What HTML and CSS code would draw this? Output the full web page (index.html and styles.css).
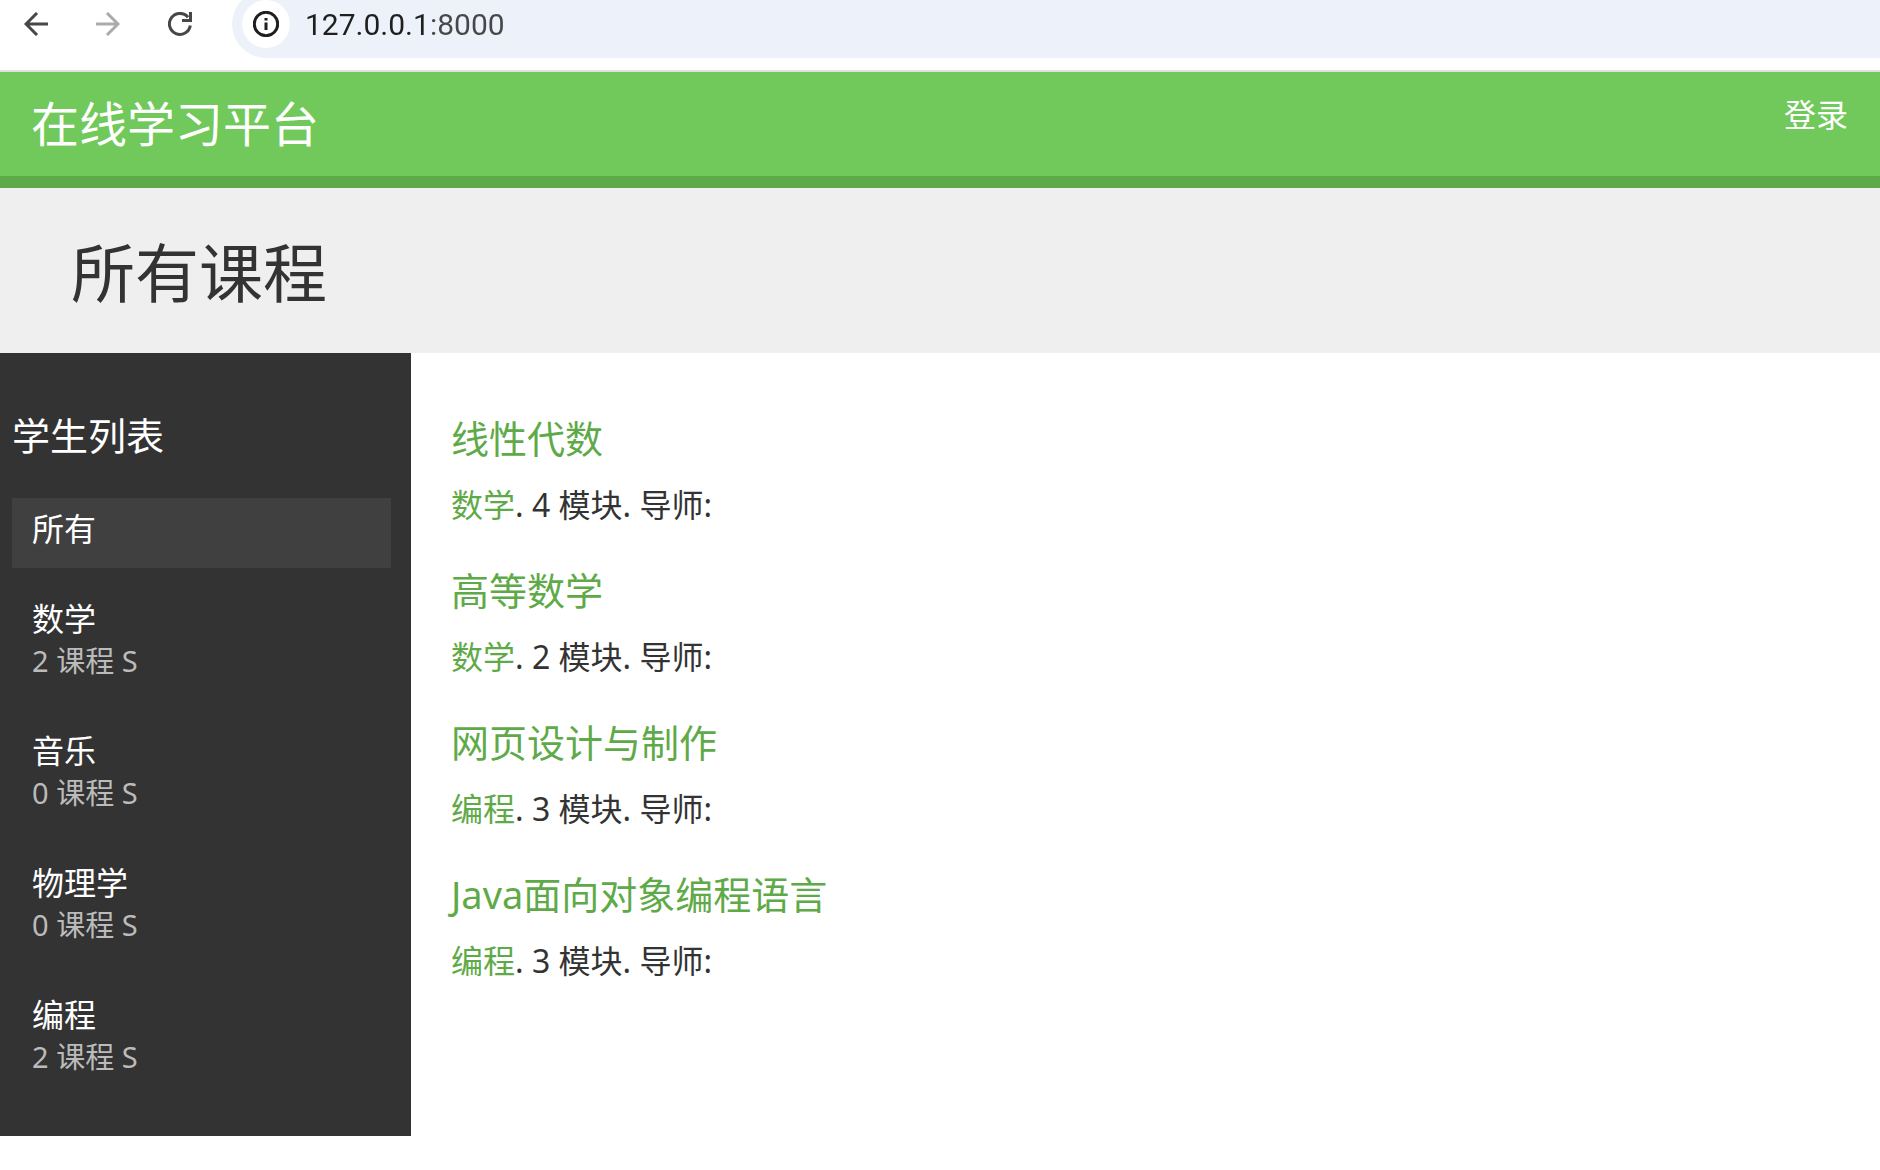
FILE: index.html
```html
<!DOCTYPE html>
<html lang="zh-CN">

<head>
    <meta charset="UTF-8">
    <meta name="viewport" content="width=device-width, initial-scale=1.0">
    <title>所有课程</title>
    <link rel="stylesheet" href="styles.css">
</head>

<body>
    <div class="browser-bar">
        <button class="nav-button" type="button" aria-label="后退">
            <svg viewBox="0 0 24 24"><path d="M24 12H2M13 1L2 12l11 11"/></svg>
        </button>
        <button class="nav-button" type="button" aria-label="前进" disabled>
            <svg viewBox="0 0 24 24"><path d="M0 12h22M11 1l11 11-11 11"/></svg>
        </button>
        <button class="nav-button" type="button" aria-label="刷新">
            <svg viewBox="0 0 24 24"><path d="M22.300 13.500A10.500 10.500 0 1 1 20 5.200M22.500 0v8.500H14"/></svg>
        </button>
        <div class="address">
            <button class="site-info" type="button" aria-label="网站信息">
                <svg viewBox="0 0 26 26"><circle cx="13" cy="13" r="11.700"/><path d="M13 11.500v7.500M13 7v2.600"/></svg>
            </button>
            <input class="url" type="text" value="127.0.0.1:8000" aria-label="地址">
        </div>
    </div>

    <header class="header">
        <a href="#" class="logo">在线学习平台</a>
        <a href="#" class="login">登录</a>
    </header>

    <h1 class="page-title">所有课程</h1>

    <div class="content">
        <nav class="sidebar">
            <h3>学生列表</h3>
            <ul>
                <li class="selected"><a href="#">所有</a></li>
                <li><a href="#">数学<small>2 课程 S</small></a></li>
                <li><a href="#">音乐<small>0 课程 S</small></a></li>
                <li><a href="#">物理学<small>0 课程 S</small></a></li>
                <li><a href="#">编程<small>2 课程 S</small></a></li>
            </ul>
        </nav>
        <main class="module">
            <section class="course">
                <h3><a href="#">线性代数</a></h3>
                <p><a href="#">数学</a>. 4 模块. 导师:</p>
            </section>
            <section class="course">
                <h3><a href="#">高等数学</a></h3>
                <p><a href="#">数学</a>. 2 模块. 导师:</p>
            </section>
            <section class="course">
                <h3><a href="#">网页设计与制作</a></h3>
                <p><a href="#">编程</a>. 3 模块. 导师:</p>
            </section>
            <section class="course">
                <h3><a href="#">Java面向对象编程语言</a></h3>
                <p><a href="#">编程</a>. 3 模块. 导师:</p>
            </section>
        </main>
    </div>
</body>

</html>
```

FILE: styles.css
```css
body {
    margin: 0;
    background-color: #fff;
    color: #333;
    font-family: "Noto Sans", "Noto Sans CJK SC", sans-serif;
    font-size: 32px;
    line-height: 42px;
}

a {
    color: #5faa48;
    text-decoration: none;
}

h1,
h3,
p,
ul {
    margin: 0;
    padding: 0;
    font-weight: normal;
}

/* browser toolbar */
.browser-bar {
    display: flex;
    align-items: flex-start;
    gap: 24px;
    height: 70px;
    padding-left: 12px;
    border-bottom: 2px solid #e0e0e0;
    overflow: hidden;
}

.browser-bar button {
    display: flex;
    flex: none;
    align-items: center;
    justify-content: center;
    padding: 0;
    border: none;
    background: none;
    color: #474747;
}

.nav-button {
    width: 48px;
    height: 48px;
}

.browser-bar .nav-button:disabled {
    color: #ababab;
}

.browser-bar svg {
    width: 24px;
    height: 24px;
    fill: none;
    stroke: currentColor;
    stroke-width: 3;
}

.address {
    display: flex;
    flex: 1;
    align-items: center;
    height: 68px;
    margin: -10px 0 0 4px;
    padding-left: 10px;
    border-radius: 34px 0 0 34px;
    background-color: #edf1fa;
}

.browser-bar .site-info {
    width: 48px;
    height: 48px;
    border-radius: 50%;
    background-color: #fff;
    color: #1f1f1f;
}

.browser-bar .site-info svg {
    width: 26px;
    height: 26px;
}

.url {
    flex: 1;
    height: 48px;
    margin-left: 15px;
    padding: 0;
    border: none;
    outline: none;
    /* host is darker than the port */
    background: linear-gradient(to right, #1f1f1f 125px, #474747 125px);
    -webkit-background-clip: text;
    background-clip: text;
    color: transparent;
    font-family: Roboto, sans-serif;
    font-size: 30px;
}

/* site header */
.header {
    display: flex;
    justify-content: space-between;
    align-items: flex-start;
    padding: 22px 32px 22px 31px;
    border-bottom: 12px solid #5faa48;
    background-color: #70c95a;
}

.header a {
    color: #fff;
}

.logo {
    font-size: 48px;
    line-height: 60px;
}

.page-title {
    padding: 42px 71px 38px;
    background-color: #efefef;
    font-size: 64px;
    line-height: 85px;
}

.content {
    display: flex;
    align-items: flex-start;
}

h3 {
    font-size: 38px;
    line-height: 50px;
}

/* sidebar */
.sidebar {
    box-sizing: border-box;
    flex: none;
    width: 411px;
    padding: 57px 20px 40px 12px;
    background-color: #333;
    color: #fff;
}

.sidebar ul {
    display: flex;
    flex-direction: column;
    gap: 20px;
    margin-top: 38px;
    list-style: none;
}

.sidebar a {
    display: block;
    padding: 10px 20px 18px;
    color: #fff;
}

.sidebar .selected {
    background-color: #404040;
}

.sidebar small {
    display: block;
    color: #bbb;
    font-size: 29px;
}

/* course list */
.module {
    flex: 1;
    padding: 60px 40px;
}

.course {
    margin-bottom: 39px;
}

.course p {
    margin-top: 21px;
}
```
